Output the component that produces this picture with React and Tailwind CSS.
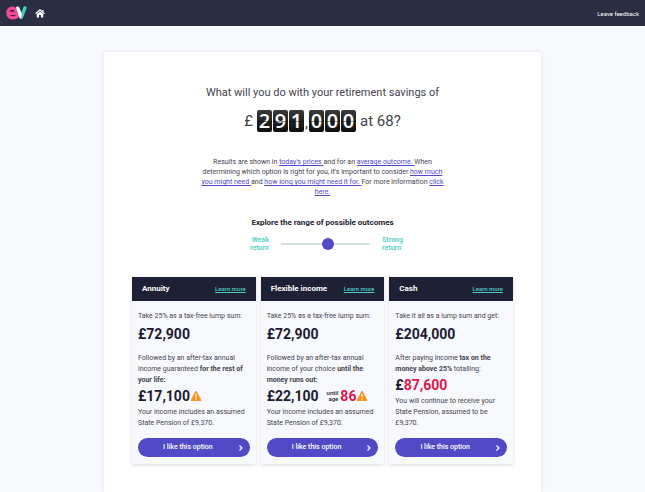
import { clsx } from 'clsx'

const WARNING = 'M6 1.2 11 10.4H1Z'

function Logo() {
  return (
    <svg viewBox="0 0 21 15" className="h-[15px] w-[21px]" role="img" aria-label="EV">
      <path d="M2.200 7.300H10.300C10.300 4 8.600 2.200 6.200 2.200 3.500 2.200 1.900 4.200 1.900 7c0 3 2 4.900 4.900 4.900 1.900 0 3.400-.5 4.600-1.600" fill="none" stroke="#f5489b" strokeWidth="3.300" strokeLinecap="round" />
      <path d="M18.900 1.900 15.300 11.300" fill="none" stroke="#35d0c3" strokeWidth="3.400" strokeLinecap="round" />
      <path d="M10 1.500C10.300.3 12.800.2 13.400 1.700L16 8.500 14.900 12.400C13.700 12.300 13.200 11.400 12.900 10.400Z" fill="#ffffff" />
    </svg>
  )
}

function HomeIcon() {
  return (
    <svg viewBox="0 0 10 9" className="h-[9px] w-[10px]" aria-hidden="true">
      <path d="M.6 4.700 5 .9l4.400 3.800M7.900 1v2" fill="none" stroke="#fff" strokeWidth="1.200" />
      <path d="M1.800 5.100 5 2.400l3.200 2.700V8.600H6V6H4v2.600H1.800Z" fill="#fff" />
    </svg>
  )
}

function WarningIcon() {
  return (
    <svg viewBox="0 0 12 12" className="size-3 shrink-0" role="img" aria-label="Warning">
      <path d={WARNING} fill="#f7931e" stroke="#f7931e" strokeWidth="1" strokeLinejoin="round" />
      <path d="M6 4v3.500M6 8.500v1.200" stroke="#fff" strokeWidth="1.100" />
    </svg>
  )
}

function TextLink({ children }) {
  return <a href="#info" className="text-[#5149c6] underline">{children}</a>
}

function Digit({ value }) {
  return (
    <span className="relative flex h-[22px] w-[15px] items-center justify-center rounded-xs bg-linear-to-b from-[#3a3a3a] to-[#0c0c0c] font-['Open_Sans',sans-serif] text-[20px] font-semibold text-white">
      {value}
      <span className="absolute inset-x-0 top-[11px] h-px bg-black/40" />
    </span>
  )
}

function Amount({ children, tone = 'text-[#1b1b30]' }) {
  return (
    <span className={clsx('text-[14px] leading-4 font-bold', tone)}>{children}</span>
  )
}

function OptionCard({ title, lead, lump, children }) {
  return (
    <section className="flex flex-1 flex-col bg-[#f8f9fd] shadow-[0_1px_4px_rgba(30,30,60,0.16)]">
      <header className="flex h-6 items-center justify-between bg-[#1e2036] px-2.5">
        <h2 className="text-[8px] font-bold text-white">{title}</h2>
        <a href="#more" className="text-[6px] leading-3 font-medium text-[#45cfc4] underline">Learn more</a>
      </header>
      <div className="flex flex-1 flex-col px-1.5 pt-2.5 pb-[7px] text-[7px] leading-[11px] text-[#44444f]">
        <p className="whitespace-nowrap">{lead}</p>
        <p className="mt-1 mb-[11px] flex"><Amount>{lump}</Amount></p>
        {children}
        <button type="button" className="mt-auto flex h-[19px] items-center rounded-full bg-[#5149c6] pr-1.5 text-[7px] font-medium text-white">
          <span className="flex-1 text-center">I like this option</span>
          <svg viewBox="0 0 6 8" className="h-2 w-1.5" aria-hidden="true">
            <path d="m1.500 1.500 2.500 2.500-2.500 2.500" fill="none" stroke="#fff" strokeWidth="1.200" />
          </svg>
        </button>
      </div>
    </section>
  )
}

export default function App() {
  return (
    <div className="flex min-h-screen flex-col bg-[#f8f9fd] font-[Roboto,sans-serif] text-[#44444f]">
      <nav className="flex h-[26px] items-center bg-[#2b2d42] px-1.5">
        <Logo />
        <a href="#home" aria-label="Home" className="ml-2"><HomeIcon /></a>
        <a href="#feedback" className="ml-auto text-[6px] text-white">Leave feedback</a>
      </nav>

      <main className="mx-[104px] mt-[26px] flex flex-1 flex-col items-center bg-white px-7 shadow-[0_0_4px_rgba(30,30,60,0.1)]">
        <h1 className="mt-8 flex flex-col items-center">
          <span className="text-[11px] leading-[18px] whitespace-nowrap">What will you do with your retirement savings of</span>
          <span className="mt-1.5 flex items-center text-[15px] leading-[22px]">
            <span className="mr-1">£</span>
            <span className="flex gap-px">
              <Digit value="2" />
              <Digit value="9" />
              <Digit value="1" />
            </span>
            <span className="w-[5px] pt-1 text-center">,</span>
            <span className="flex gap-px">
              <Digit value="0" />
              <Digit value="0" />
              <Digit value="0" />
            </span>
            <span className="ml-1">at 68?</span>
          </span>
        </h1>

        <p className="mt-[23px] w-[250px] text-center text-[7px] leading-[10px]">
          Results are shown in <TextLink>today's prices </TextLink>and for an <TextLink>average outcome. </TextLink>When
          determining which option is right for you, it's important to consider <TextLink>how much
          you might need </TextLink>and <TextLink>how long you might need it for. </TextLink>For more information <TextLink>click
          here.</TextLink>
        </p>

        <label htmlFor="outcome" className="mt-5 text-[8px] leading-3 font-bold text-[#1b1b30]">Explore the range of possible outcomes</label>
        <div className="mt-[7px] flex items-center gap-3 pl-1.5 text-[7px] leading-2 font-bold text-[#5fd3c9]">
          <span className="w-[22px] text-right">Weak return</span>
          <input
            id="outcome"
            type="range"
            min="0"
            max="100"
            defaultValue="53"
            className="h-3 w-[89px] appearance-none bg-transparent [&::-webkit-slider-runnable-track]:h-0.5 [&::-webkit-slider-runnable-track]:bg-[#d5dfe2] [&::-webkit-slider-thumb]:-mt-[5px] [&::-webkit-slider-thumb]:size-3 [&::-webkit-slider-thumb]:appearance-none [&::-webkit-slider-thumb]:rounded-full [&::-webkit-slider-thumb]:bg-[#5149c6]"
          />
          <span className="w-[22px]">Strong return</span>
        </div>

        <div className="mt-[25px] flex h-[187px] w-full gap-[5px]">
          <OptionCard title="Annuity" lead="Take 25% as a tax-free lump sum:" lump="£72,900">
            <p>Followed by an after-tax annual income guaranteed <b>for the rest of your life:</b></p>
            <p className="mt-0.5 mb-[3px] flex items-center"><Amount>£17,100</Amount><WarningIcon /></p>
            <p>Your income includes an assumed State Pension of £9,370.</p>
          </OptionCard>
          <OptionCard title="Flexible income" lead="Take 25% as a tax-free lump sum:" lump="£72,900">
            <p>Followed by an after-tax annual income of your choice <b>until the money runs out:</b></p>
            <p className="mt-0.5 mb-[3px] flex items-center">
              <Amount>£22,100</Amount>
              <span className="mr-0.5 ml-2 text-right text-[6px] leading-[6px] font-medium text-[#1b1b30]">until<br />age</span>
              <Amount tone="text-[#e0144c]">86</Amount>
              <WarningIcon />
            </p>
            <p>Your income includes an assumed State Pension of £9,370.</p>
          </OptionCard>
          <OptionCard title="Cash" lead="Take it all as a lump sum and get:" lump="£204,000">
            <p>After paying income <b>tax on the money above 25%</b> totalling:</p>
            <p className="mt-0.5 mb-[3px] flex items-center"><Amount>£</Amount><Amount tone="text-[#e0144c]">87,600</Amount></p>
            <p>You will continue to receive your State Pension, assumed to be £9,370.</p>
          </OptionCard>
        </div>
      </main>
    </div>
  )
}
